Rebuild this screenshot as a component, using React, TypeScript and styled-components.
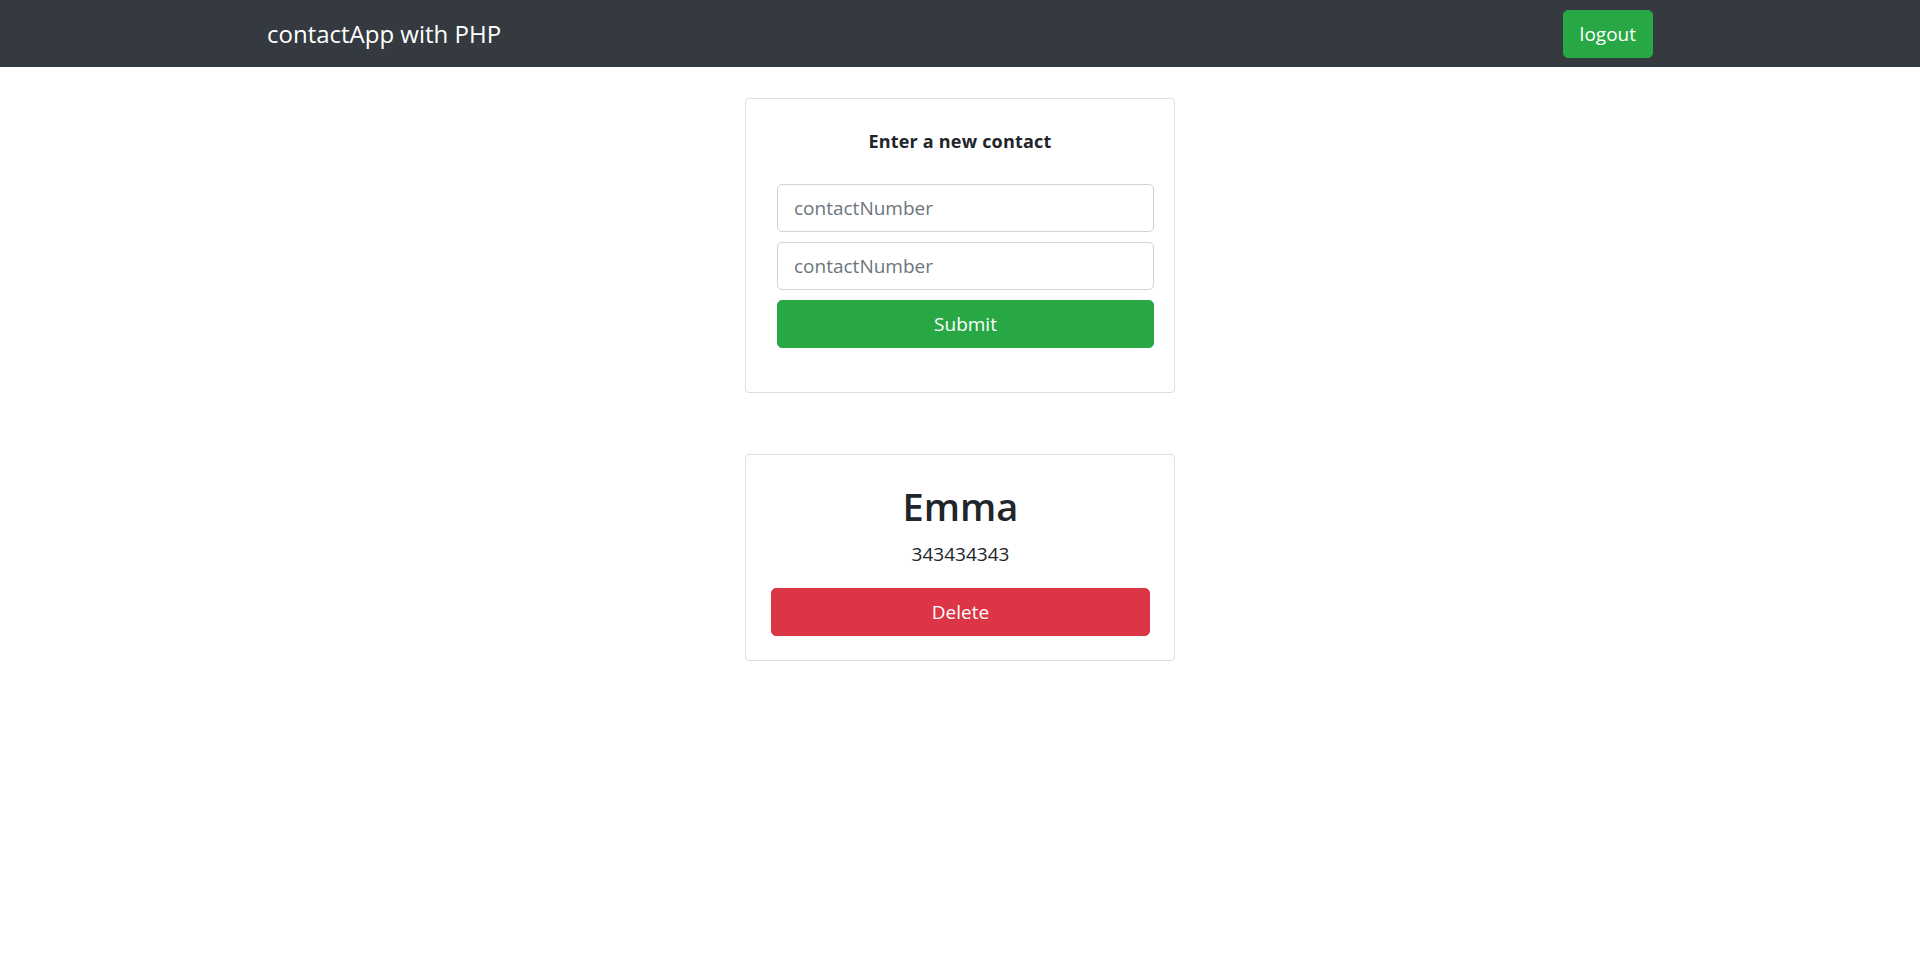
import React from "react";
import styled, { createGlobalStyle } from "styled-components";

const Global = createGlobalStyle`
  * { box-sizing: border-box; }
  body {
    margin: 0;
    font-family: "Open Sans", "Noto Sans", sans-serif;
    color: #212529;
    background: #fff;
  }
`;

const Navbar = styled.nav`
  height: 67px;
  background: #343a40;
  display: flex;
  align-items: center;
  justify-content: space-between;
  padding: 0 267px;
`;

const Brand = styled.a`
  color: #fff;
  font-size: 24px;
  line-height: 32px;
  text-decoration: none;
`;

const Button = styled.button<{ $variant: "success" | "danger"; $block?: boolean }>`
  display: block;
  width: ${(p) => (p.$block ? "100%" : "auto")};
  height: 48px;
  padding: 0 16px;
  border: 1px solid ${(p) => (p.$variant === "success" ? "#28a745" : "#dc3545")};
  background: ${(p) => (p.$variant === "success" ? "#28a745" : "#dc3545")};
  color: #fff;
  font-family: inherit;
  font-size: 19px;
  line-height: 28px;
  border-radius: 5px;
  cursor: pointer;
`;

const Main = styled.main`
  display: flex;
  flex-direction: column;
  align-items: center;
  padding-top: 31px;
`;

const Card = styled.div<{ $pad: string }>`
  width: 430px;
  border: 1px solid #dfdfdf;
  border-radius: 4px;
  padding: ${(p) => p.$pad};
  text-align: center;
  & + & {
    margin-top: 61px;
  }
`;

const FormTitle = styled.h6`
  margin: 0 0 31px;
  font-size: 18px;
  line-height: 24px;
  font-weight: 700;
  letter-spacing: 0.2px;
`;

const Form = styled.form`
  display: flex;
  flex-direction: column;
  gap: 10px;
  padding-left: 11px;
`;

const Input = styled.input`
  height: 48px;
  width: 100%;
  padding: 0 16px;
  border: 1px solid #ced4da;
  border-radius: 5px;
  font-family: inherit;
  font-size: 19px;
  color: #495057;
  &::placeholder {
    color: #6c757d;
  }
`;

const Name = styled.h1`
  margin: 0;
  font-size: 38px;
  line-height: 48px;
  font-weight: 600;
`;

const Number = styled.p`
  margin: 12px 0 22px;
  font-size: 19px;
  line-height: 24px;
`;

export default function App() {
  return (
    <>
      <Global />
      <Navbar>
        <Brand href="#">contactApp with PHP</Brand>
        <Button $variant="success">logout</Button>
      </Navbar>
      <Main>
        <Card $pad="30px 20px 44px 20px">
          <FormTitle>Enter a new contact</FormTitle>
          <Form onSubmit={(e) => e.preventDefault()}>
            <Input placeholder="contactNumber" />
            <Input placeholder="contactNumber" />
            <Button $variant="success" $block type="submit">
              Submit
            </Button>
          </Form>
        </Card>
        <Card $pad="27px 24px 24px 25px">
          <Name>Emma</Name>
          <Number>343434343</Number>
          <Button $variant="danger" $block>
            Delete
          </Button>
        </Card>
      </Main>
    </>
  );
}
